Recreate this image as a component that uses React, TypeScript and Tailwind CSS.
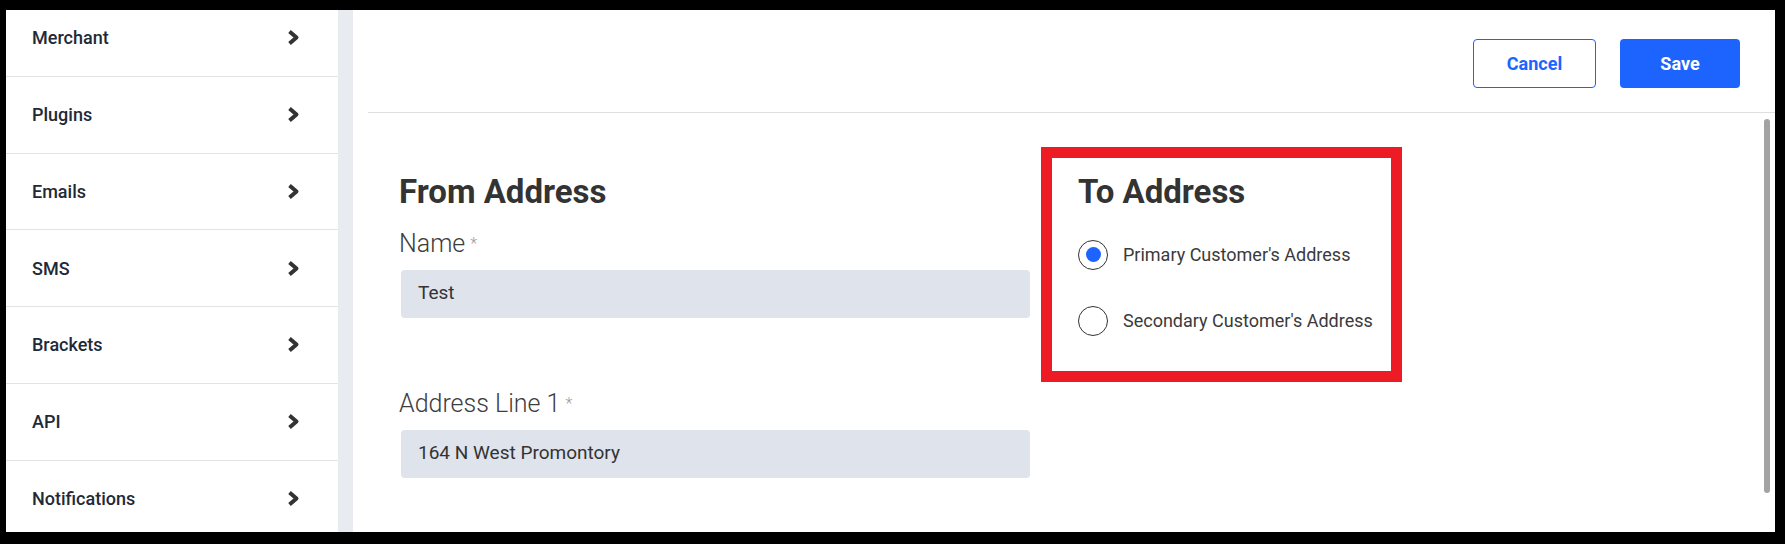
const menu = ["Merchant", "Plugins", "Emails", "SMS", "Brackets", "API", "Notifications"];

function Chevron() {
  return (
    <svg width="14" height="17" viewBox="0 0 14 17" className="text-[#333]">
      <polyline points="3.5,2.5 10.5,8.5 3.5,14.5" fill="none" stroke="currentColor" strokeWidth="4" strokeLinejoin="round" />
    </svg>
  );
}

function Radio({ checked, label }: { checked?: boolean; label: string }) {
  return (
    <label className="flex items-center gap-[15px] h-[30px]">
      <span className="flex h-[30px] w-[30px] items-center justify-center rounded-full border-[1.5px] border-[#333]">
        {checked && <span className="h-[15px] w-[15px] rounded-full bg-[#1d64ff]" />}
      </span>
      <span className="text-[18px] text-[#3a3a3a]">{label}</span>
    </label>
  );
}

function Field({ label, value }: { label: string; value: string }) {
  return (
    <div className="mb-[69px]">
      <div className="h-[34px] text-[25px] leading-[34px] font-light text-[#3d3d3d]">
        {label}
        <span className="ml-[5px] align-top text-[16px] text-[#9a9a9a]">*</span>
      </div>
      <div className="mt-[9px] ml-[2px] flex h-[48px] items-center rounded-[4px] bg-[#dfe3eb] pl-[17px] text-[19px] text-[#333]">
        {value}
      </div>
    </div>
  );
}

export default function App() {
  return (
    <div className="h-[544px] w-[1785px] bg-black pt-[10px] pr-[10px] pb-[12px] pl-[6px] font-['Roboto',sans-serif]">
      <div className="flex h-full overflow-hidden bg-white">
        <aside className="w-[332px] shrink-0 overflow-hidden">
          <ul className="-mt-[10px]">
            {menu.map((m) => (
              <li
                key={m}
                className="box-border flex h-[76.75px] items-center justify-between border-b border-[#e3e3e3] pr-[38px] pl-[26px]"
              >
                <span className="text-[18px] font-medium text-[#1f2a37]">{m}</span>
                <Chevron />
              </li>
            ))}
          </ul>
        </aside>
        <div className="w-[15px] shrink-0 bg-[#e8ebef]" />
        <main className="relative flex flex-1 flex-col">
          <header className="flex h-[103px] shrink-0 items-start justify-end gap-[24px] border-b border-[#dedede] pt-[29px] pr-[35px] ml-[15px]">
            <button className="h-[49px] w-[123px] rounded-[4px] border border-[#1d64ff] text-[18px] font-bold text-[#1d64ff]">
              Cancel
            </button>
            <button className="h-[49px] w-[120px] rounded-[4px] bg-[#1d64ff] text-[18px] font-bold text-white">
              Save
            </button>
          </header>
          <div className="flex items-start pl-[46px]">
            <section className="w-[631px] pt-[59px]">
              <h2 className="text-[33px] leading-[39.6px] font-bold text-[#333]">From Address</h2>
              <div className="mt-[15px]">
                <Field label="Name" value="Test" />
                <Field label="Address Line 1" value="164 N West Promontory" />
              </div>
            </section>
            <section className="mt-[34px] ml-[11px] h-[235px] w-[361px] border-[11px] border-[#ed1c24] pt-[14px] pl-[26px]">
              <h2 className="text-[33px] leading-[39.6px] font-bold text-[#333]">To Address</h2>
              <div className="mt-[28px] flex flex-col gap-[36px]">
                <Radio checked label="Primary Customer's Address" />
                <Radio label="Secondary Customer's Address" />
              </div>
            </section>
          </div>
          <div className="absolute top-[109px] right-[5px] h-[374px] w-[6px] rounded-full bg-[#a3a3a3]" />
        </main>
      </div>
    </div>
  );
}
